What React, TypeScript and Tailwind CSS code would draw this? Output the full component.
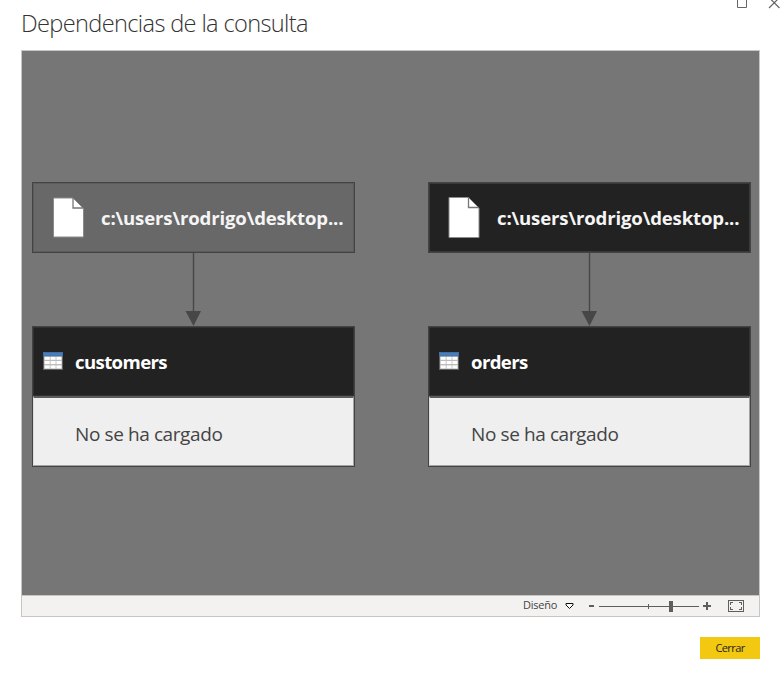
type QueryNode = { id: string; source: string; name: string; status: string; highlighted: boolean };

const queries: QueryNode[] = [
  { id: 'customers', source: 'c:\\users\\rodrigo\\desktop...', name: 'customers', status: 'No se ha cargado', highlighted: true },
  { id: 'orders', source: 'c:\\users\\rodrigo\\desktop...', name: 'orders', status: 'No se ha cargado', highlighted: false },
];

function FileIcon({ tall }: { tall: boolean }) {
  return (
    <svg width="33" height="43" viewBox="0 0 33 43" className="shrink-0">
      <path d={tall ? 'M1 1.5H20.5L31 12V41.5H1Z' : 'M1.5 2H21L31.5 12.5V41H1.5Z'} fill="#fff" stroke="#8b8b8b" />
      <path d={tall ? 'M20.5 1.5V11.5H31' : 'M21 2V12H31.5'} fill="none" stroke="#777" strokeWidth="1.3" />
    </svg>
  );
}

function TableIcon() {
  return (
    <svg width="20" height="18" viewBox="0 0 20 18" className="-mt-[2px] shrink-0">
      <rect x="0.5" y="0.5" width="19" height="17" fill="#bcbcbc" stroke="#606060" />
      <rect x="0.5" y="0.5" width="19" height="3.5" fill="#4a7ebb" stroke="#426fa5" />
      {[4.8, 9, 13.4].map((y) =>
        [1.7, 7.6, 13.4].map((x) => <rect key={`${x}-${y}`} x={x} y={y} width="5" height="3" fill="#fff" />),
      )}
    </svg>
  );
}

function QueryChain({ query }: { query: QueryNode }) {
  return (
    <div className="flex w-[323px] flex-col items-center">
      <div
        className={`flex h-[71px] w-full items-center border border-[#434343] pl-[19px] inset-shadow-[0_0_0_1px_#50505080] ${
          query.highlighted ? 'bg-[#686868]' : 'bg-[#222222]'
        }`}
      >
        <FileIcon tall={!query.highlighted} />
        <span className="ml-4 whitespace-nowrap text-[18.6px] leading-6 font-bold tracking-[-0.16px] text-[#f5f5f5]">
          {query.source}
        </span>
      </div>
      <svg width="17" height="73" viewBox="0 0 17 73">
        <path d="M8.5 0V60" stroke="#474747" strokeWidth="1.4" />
        <path d="M0.5 58H16L8.5 73Z" fill="#474747" />
      </svg>
      <div className="h-[141px] w-full border border-[#434343] bg-[#efefef]">
        <div className="flex h-[69px] items-center bg-[#222222] pt-px pl-[10px] inset-shadow-[0_0_0_1px_#40404080]">
          <TableIcon />
          <span className="ml-3 text-[18.6px] leading-6 font-bold tracking-[-0.62px] text-white">{query.name}</span>
        </div>
        <div className="flex h-[70px] items-center border border-t-2 border-[#a3a3a3] border-t-[#5c5c5c] border-l-[#dedede] pt-[5px] pl-[41px] text-[19px] text-[#444]">
          <span className="tracking-[-0.4px]">{query.status}</span>
        </div>
      </div>
    </div>
  );
}

export default function App() {
  return (
    <div className="relative h-[674px] w-[783px] overflow-hidden bg-white font-['Open_Sans','Noto_Sans',sans-serif]">
      <svg className="absolute top-0 right-0" width="50" height="12" viewBox="0 0 50 12" fill="none" stroke="#666">
        <path d="M4.5 0V7.5H13.5V0" />
        <path d="M36 -2.5L46.5 8M46.5 -2.5L36 8" strokeWidth="1.2" />
      </svg>
      <div className="flex h-full flex-col pl-[21px]">
        <h1 className="flex h-[50px] items-center pb-[3px] text-[23.6px] font-light tracking-[-0.65px] whitespace-nowrap text-[#333]">
          Dependencias de la consulta
        </h1>
        <main className="flex h-[567px] w-[739px] flex-col border border-[#c8c6c4]">
          <section className="flex h-[544px] gap-[73px] bg-[#767676] pt-[131px] pl-[10px]">
            {queries.map((query) => (
              <QueryChain key={query.id} query={query} />
            ))}
          </section>
          <footer className="flex h-[21px] items-center justify-end border-t border-[#c8c6c4] bg-[#f3f2f1] pr-[15px]">
            <span className="-mt-[2px] text-[11px] leading-4 tracking-[-0.25px] text-[#444]">Diseño</span>
            <svg className="-mt-px ml-2" width="9" height="8" viewBox="0 0 9 8">
              <path d="M1 1.5H8V3L4.5 6.5L1 3Z" fill="#fff" stroke="#111" />
            </svg>
            <svg className="ml-[14px]" width="124" height="13" viewBox="0 0 124 13" shapeRendering="crispEdges" fill="#605e5c">
              <rect x="1" y="5" width="5" height="2" />
              <rect x="11" y="6" width="100" height="1" />
              <rect x="60" y="4" width="1" height="5" />
              <rect x="81" y="1" width="4" height="11" />
              <rect x="115" y="5" width="8" height="2" />
              <rect x="118" y="2" width="2" height="8" />
            </svg>
            <svg className="ml-4" width="16" height="12" viewBox="0 0 16 12" fill="none" stroke="#605e5c" shapeRendering="crispEdges">
              <rect x="0.5" y="0.5" width="15" height="11" />
              <path d="M2.5 5V2.5H5M11 2.5H13.5V5M13.5 7V9.5H11M5 9.5H2.5V7" />
            </svg>
          </footer>
        </main>
        <button className="mt-5 ml-[679px] flex h-[22px] w-[60px] items-center justify-center self-start bg-[#f2c811] text-[11px] tracking-[-0.6px] text-[#222]">
          Cerrar
        </button>
      </div>
    </div>
  );
}
